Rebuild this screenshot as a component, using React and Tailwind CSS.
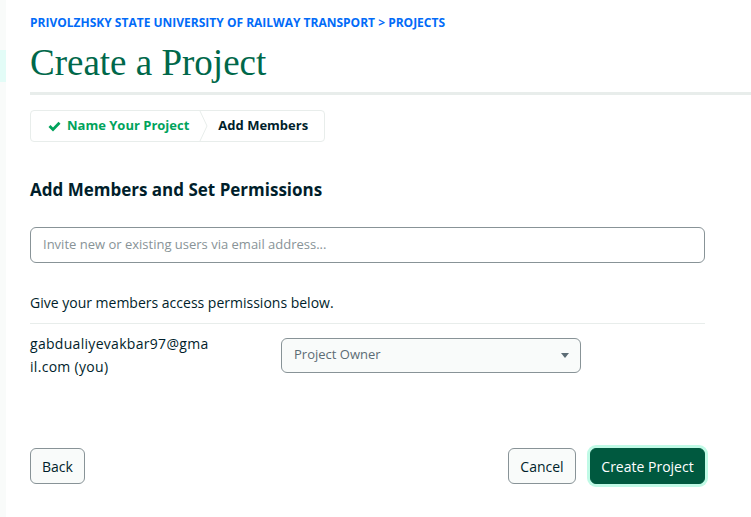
export default function App() {
  return (
    <div className="flex min-h-[517px] bg-white font-['Open_Sans',sans-serif] text-[#001e2b]">
      {/* sidebar edge */}
      <div className="w-[6px] shrink-0 bg-[#f9fbfa] pt-[50px]">
        <div className="h-[32px] bg-[#e3fcf7]" />
      </div>

      <div className="flex-1 pl-[24px]">
        <div className="pt-[15px] text-[12px] font-bold leading-[16px] text-[#016bf8]">
          PRIVOLZHSKY STATE UNIVERSITY OF RAILWAY TRANSPORT &gt; PROJECTS
        </div>
        <h1 className="mt-[10px] font-['Liberation_Serif',serif] text-[37px] leading-[44px] text-[#00684a]">
          Create a Project
        </h1>
        <div className="mt-[7px] h-[3px] bg-[#e8edeb]" />

        <div className="w-[675px]">
          {/* stepper */}
          <div className="mt-[15px] inline-flex h-[32px] items-stretch rounded-[4px] border border-[#e8edeb] text-[13px] font-bold">
            <div className="flex items-center gap-[6px] pl-[17px] pr-[10px] text-[#00a35c]">
              <svg width="13" height="11" viewBox="0 0 13 11">
                <path d="M0.5 6 L2.5 4 L5 6.5 L10.5 0.8 L12.5 2.8 L5 10.5 Z" fill="#00a35c" />
              </svg>
              Name Your Project
            </div>
            <svg width="10" height="30" viewBox="0 0 10 30" className="shrink-0">
              <path d="M1 0 L8 15 L1 30" fill="none" stroke="#e8edeb" strokeWidth="1" />
            </svg>
            <div className="flex items-center pl-[9px] pr-[16px] text-[#001e2b]">Add Members</div>
          </div>

          <h2 className="mt-[36px] text-[17px] font-bold leading-[24px]">Add Members and Set Permissions</h2>

          <div className="mt-[25px] flex h-[36px] items-center rounded-[6px] border border-[#889397] px-[12px] text-[13px] text-[#889397]">
            Invite new or existing users via email address...
          </div>

          <p className="mt-[30px] text-[14px] leading-[20px]">Give your members access permissions below.</p>
          <div className="mt-[10px] h-px bg-[#e8edeb]" />

          <div className="mt-[8px] flex items-center">
            <div className="w-[251px] text-[14px] leading-[23px] tracking-[0.3px]">
              gabdualiyevakbar97@gma
              <br />
              il.com (you)
            </div>
            <div className="flex h-[35px] w-[300px] items-center justify-between rounded-[6px] border border-[#889397] bg-[#f9fbfa] pl-[12px] pr-[11px] text-[13px] text-[#5c6c75]">
              Project Owner
              <svg width="8" height="5" viewBox="0 0 8 5">
                <path d="M0 0 H8 L4 5 Z" fill="#5c6c75" />
              </svg>
            </div>
          </div>

          <div className="mt-[70px] flex items-center justify-between">
            <button className="h-[36px] w-[55px] rounded-[6px] border border-[#889397] bg-[#f9fbfa] text-[14px] font-medium">
              Back
            </button>
            <div className="flex items-center gap-[14px]">
              <button className="h-[36px] w-[68px] rounded-[6px] border border-[#889397] bg-[#f9fbfa] text-[14px] font-medium">
                Cancel
              </button>
              <button className="h-[36px] w-[115px] rounded-[6px] border border-[#00593f] bg-[#00593f] text-[14px] font-medium text-white ring-[3px] ring-[#c0fae6]">
                Create Project
              </button>
            </div>
          </div>
        </div>
      </div>
    </div>
  )
}
